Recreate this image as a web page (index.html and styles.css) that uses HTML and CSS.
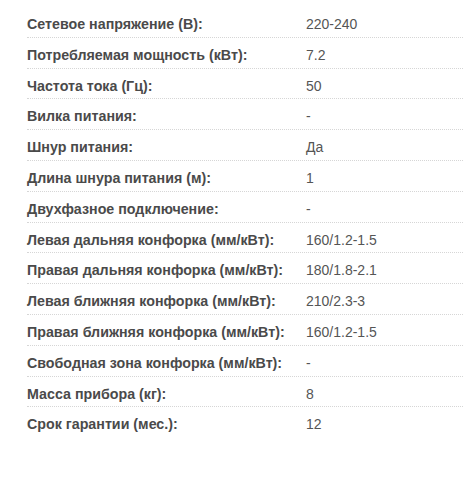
FILE: index.html
```html
<!DOCTYPE html>
<html lang="ru">
<head>
<meta charset="utf-8">
<link rel="stylesheet" href="styles.css">
</head>
<body>
<div class="specs">
  <div class="row"><div class="label">Сетевое напряжение (В):</div><div class="value">220-240</div></div>
  <div class="row"><div class="label">Потребляемая мощность (кВт):</div><div class="value">7.2</div></div>
  <div class="row"><div class="label">Частота тока (Гц):</div><div class="value">50</div></div>
  <div class="row"><div class="label">Вилка питания:</div><div class="value">-</div></div>
  <div class="row"><div class="label">Шнур питания:</div><div class="value">Да</div></div>
  <div class="row"><div class="label">Длина шнура питания (м):</div><div class="value">1</div></div>
  <div class="row"><div class="label">Двухфазное подключение:</div><div class="value">-</div></div>
  <div class="row"><div class="label">Левая дальняя конфорка (мм/кВт):</div><div class="value">160/1.2-1.5</div></div>
  <div class="row"><div class="label">Правая дальняя конфорка (мм/кВт):</div><div class="value">180/1.8-2.1</div></div>
  <div class="row"><div class="label">Левая ближняя конфорка (мм/кВт):</div><div class="value">210/2.3-3</div></div>
  <div class="row"><div class="label">Правая ближняя конфорка (мм/кВт):</div><div class="value">160/1.2-1.5</div></div>
  <div class="row"><div class="label">Свободная зона конфорка (мм/кВт):</div><div class="value">-</div></div>
  <div class="row"><div class="label">Масса прибора (кг):</div><div class="value">8</div></div>
  <div class="row last"><div class="label">Срок гарантии (мес.):</div><div class="value">12</div></div>
</div>
</body>
</html>
```

FILE: styles.css
```css
html, body {
  margin: 0;
  padding: 0;
  background: #fff;
}
body {
  font-family: "Liberation Sans", Arial, sans-serif;
  font-size: 14px;
}
.specs {
  padding: 7px 0 0 27px;
}
.row {
  display: flex;
  line-height: 16px;
  padding: 9px 0 4.8px;
  border-bottom: 1px dotted #d6d6d6;
}
.row.last {
  border-bottom: none;
}
.label {
  width: 279px;
  flex: none;
  font-size: 14.25px;
  font-weight: bold;
  color: #4a4a4a;
}
.value {
  color: #555;
}
```
